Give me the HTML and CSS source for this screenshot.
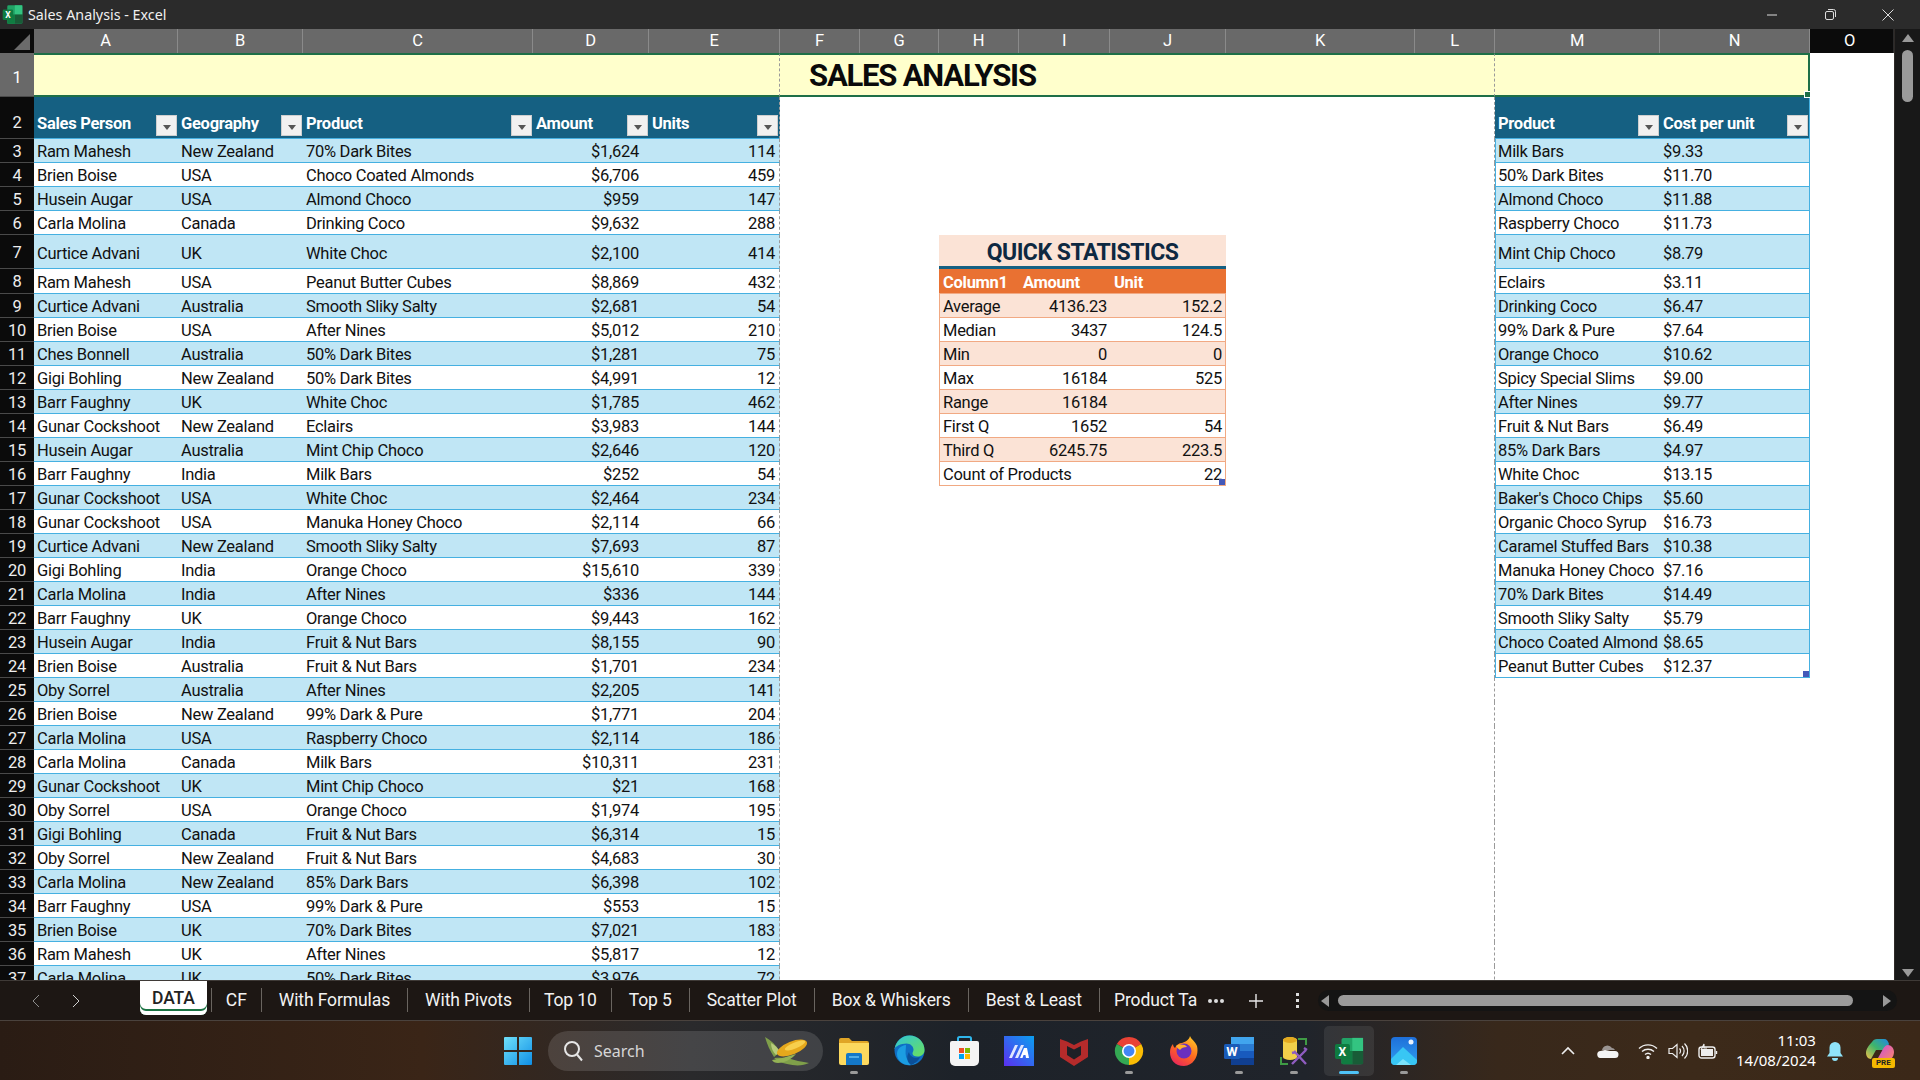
FILE: index.html
```html
<!DOCTYPE html>
<html lang="en">
<head>
    <meta charset="UTF-8">
    <title>Sales Analysis - Excel</title>
    <link rel="stylesheet" href="styles.css">
</head>
<body>
    <!-- Shared app icons -->
    <svg class="defs" width="0" height="0">
        <defs>
            <symbol id="excel" viewBox="0 0 32 32">
                <rect x="8" y="2" width="23" height="28" rx="2" fill="#21A366"/>
                <rect x="19.5" y="2" width="11.5" height="14" fill="#33C481"/>
                <rect x="8" y="16" width="11.5" height="14" fill="#107C41"/>
                <rect x="19.5" y="16" width="11.5" height="14" fill="#185C37"/>
                <rect x="1" y="8.5" width="16" height="16" rx="2" fill="#0F7B40"/>
                <text x="9" y="21.5" text-anchor="middle" font-family="Roboto" font-size="13" font-weight="700" fill="#fff">X</text>
            </symbol>
        </defs>
    </svg>

    <!-- Title bar -->
    <header class="titlebar">
        <svg class="app-icon" width="21" height="21"><use href="#excel"/></svg>
        <span class="doc-name">Sales Analysis - Excel</span>
        <div class="win-controls">
            <svg width="14" height="14" viewBox="0 0 14 14"><path d="M2 7h10" stroke="#ddd" stroke-width="1"/></svg>
            <svg width="14" height="14" viewBox="0 0 14 14" fill="none" stroke="#ddd"><rect x="2.5" y="3.5" width="8" height="8" rx="1.5"/><path d="M5 1.5h5.5a2 2 0 0 1 2 2V9"/></svg>
            <svg width="14" height="14" viewBox="0 0 14 14"><path d="M1.5 1.5l11 11M12.5 1.5l-11 11" stroke="#ddd" stroke-width="1"/></svg>
        </div>
    </header>

    <!-- Sheet -->
    <main class="workbook">
        <div class="sheet">
            <table class="grid">
                <colgroup>
                    <col class="w-rowhead"><col class="w-a"><col class="w-b"><col class="w-c"><col class="w-d"><col class="w-e">
                    <col class="w-f"><col class="w-g"><col class="w-h"><col class="w-i"><col class="w-j"><col class="w-k">
                    <col class="w-l"><col class="w-m"><col class="w-n"><col class="w-o">
                </colgroup>
                <thead>
                    <tr>
                        <th class="corner"><svg width="34" height="23" viewBox="0 0 34 23"><path d="M30 4v16H14z" fill="#6b6b6b"/></svg></th>
                        <th>A</th><th>B</th><th>C</th><th>D</th><th>E</th><th>F</th><th>G</th><th>H</th><th>I</th><th>J</th><th>K</th><th>L</th><th>M</th><th>N</th>
                        <th class="col-off">O</th>
                    </tr>
                </thead>
                <tbody>
                    <tr class="r1">
                        <th class="row-on">1</th>
                        <td class="banner dash-r" colspan="5"></td>
                        <td class="banner banner-mid dash-r" colspan="7"><span class="sheet-title">SALES ANALYSIS</span></td>
                        <td class="banner banner-end" colspan="2"></td>
                        <td class="blank"></td>
                    </tr>
                    <tr class="r2">
                        <th class="row-two">2</th>
                        <td class="head"><div class="hcell">Sales Person<span class="filter"></span></div></td>
                        <td class="head"><div class="hcell">Geography<span class="filter"></span></div></td>
                        <td class="head"><div class="hcell">Product<span class="filter"></span></div></td>
                        <td class="head"><div class="hcell">Amount<span class="filter"></span></div></td>
                        <td class="head dash-r"><div class="hcell">Units<span class="filter"></span></div></td>
                        <td class="blank dash-r" colspan="7"></td>
                        <td class="head"><div class="hcell">Product<span class="filter"></span></div></td>
                        <td class="head end"><div class="hcell">Cost per unit<span class="filter"></span></div></td>
                        <td class="blank"></td>
                    </tr>
                    <tr><th>3</th><td>Ram Mahesh</td><td>New Zealand</td><td>70% Dark Bites</td><td class="amt">$1,624</td><td class="units">114</td><td class="blank dash-r" colspan="7"></td><td class="m">Milk Bars</td><td class="end">$9.33</td><td class="blank"></td></tr>
                    <tr><th>4</th><td>Brien Boise</td><td>USA</td><td>Choco Coated Almonds</td><td class="amt">$6,706</td><td class="units">459</td><td class="blank dash-r" colspan="7"></td><td class="m">50% Dark Bites</td><td class="end">$11.70</td><td class="blank"></td></tr>
                    <tr><th>5</th><td>Husein Augar</td><td>USA</td><td>Almond Choco</td><td class="amt">$959</td><td class="units">147</td><td class="blank dash-r" colspan="7"></td><td class="m">Almond Choco</td><td class="end">$11.88</td><td class="blank"></td></tr>
                    <tr><th>6</th><td>Carla Molina</td><td>Canada</td><td>Drinking Coco</td><td class="amt">$9,632</td><td class="units">288</td><td class="blank dash-r" colspan="7"></td><td class="m">Raspberry Choco</td><td class="end">$11.73</td><td class="blank"></td></tr>
                    <tr class="r7">
                        <th>7</th><td>Curtice Advani</td><td>UK</td><td>White Choc</td><td class="amt">$2,100</td><td class="units">414</td>
                        <td class="blank" colspan="2"></td>
                        <td class="stat-title" colspan="3">QUICK STATISTICS</td>
                        <td class="blank dash-r" colspan="2"></td>
                        <td class="m">Mint Chip Choco</td><td class="end">$8.79</td><td class="blank"></td>
                    </tr>
                    <tr class="r8">
                        <th>8</th><td>Ram Mahesh</td><td>USA</td><td>Peanut Butter Cubes</td><td class="amt">$8,869</td><td class="units">432</td>
                        <td class="blank" colspan="2"></td>
                        <td class="stat-head">Column1</td><td class="stat-head">Amount</td><td class="stat-head">Unit</td>
                        <td class="blank dash-r" colspan="2"></td>
                        <td class="m">Eclairs</td><td class="end">$3.11</td><td class="blank"></td>
                    </tr>
                    <tr>
                        <th>9</th><td>Curtice Advani</td><td>Australia</td><td>Smooth Sliky Salty</td><td class="amt">$2,681</td><td class="units">54</td>
                        <td class="blank" colspan="2"></td>
                        <td class="stat s-l">Average</td><td class="stat s-n">4136.23</td><td class="stat s-r">152.2</td>
                        <td class="blank dash-r" colspan="2"></td>
                        <td class="m">Drinking Coco</td><td class="end">$6.47</td><td class="blank"></td>
                    </tr>
                    <tr>
                        <th>10</th><td>Brien Boise</td><td>USA</td><td>After Nines</td><td class="amt">$5,012</td><td class="units">210</td>
                        <td class="blank" colspan="2"></td>
                        <td class="stat s-l">Median</td><td class="stat s-n">3437</td><td class="stat s-r">124.5</td>
                        <td class="blank dash-r" colspan="2"></td>
                        <td class="m">99% Dark &amp; Pure</td><td class="end">$7.64</td><td class="blank"></td>
                    </tr>
                    <tr>
                        <th>11</th><td>Ches Bonnell</td><td>Australia</td><td>50% Dark Bites</td><td class="amt">$1,281</td><td class="units">75</td>
                        <td class="blank" colspan="2"></td>
                        <td class="stat s-l">Min</td><td class="stat s-n">0</td><td class="stat s-r">0</td>
                        <td class="blank dash-r" colspan="2"></td>
                        <td class="m">Orange Choco</td><td class="end">$10.62</td><td class="blank"></td>
                    </tr>
                    <tr>
                        <th>12</th><td>Gigi Bohling</td><td>New Zealand</td><td>50% Dark Bites</td><td class="amt">$4,991</td><td class="units">12</td>
                        <td class="blank" colspan="2"></td>
                        <td class="stat s-l">Max</td><td class="stat s-n">16184</td><td class="stat s-r">525</td>
                        <td class="blank dash-r" colspan="2"></td>
                        <td class="m">Spicy Special Slims</td><td class="end">$9.00</td><td class="blank"></td>
                    </tr>
                    <tr>
                        <th>13</th><td>Barr Faughny</td><td>UK</td><td>White Choc</td><td class="amt">$1,785</td><td class="units">462</td>
                        <td class="blank" colspan="2"></td>
                        <td class="stat s-l">Range</td><td class="stat s-n">16184</td><td class="stat s-r"></td>
                        <td class="blank dash-r" colspan="2"></td>
                        <td class="m">After Nines</td><td class="end">$9.77</td><td class="blank"></td>
                    </tr>
                    <tr>
                        <th>14</th><td>Gunar Cockshoot</td><td>New Zealand</td><td>Eclairs</td><td class="amt">$3,983</td><td class="units">144</td>
                        <td class="blank" colspan="2"></td>
                        <td class="stat s-l">First Q</td><td class="stat s-n">1652</td><td class="stat s-r">54</td>
                        <td class="blank dash-r" colspan="2"></td>
                        <td class="m">Fruit &amp; Nut Bars</td><td class="end">$6.49</td><td class="blank"></td>
                    </tr>
                    <tr>
                        <th>15</th><td>Husein Augar</td><td>Australia</td><td>Mint Chip Choco</td><td class="amt">$2,646</td><td class="units">120</td>
                        <td class="blank" colspan="2"></td>
                        <td class="stat s-l">Third Q</td><td class="stat s-n">6245.75</td><td class="stat s-r">223.5</td>
                        <td class="blank dash-r" colspan="2"></td>
                        <td class="m">85% Dark Bars</td><td class="end">$4.97</td><td class="blank"></td>
                    </tr>
                    <tr>
                        <th>16</th><td>Barr Faughny</td><td>India</td><td>Milk Bars</td><td class="amt">$252</td><td class="units">54</td>
                        <td class="blank" colspan="2"></td>
                        <td class="stat s-l" colspan="2">Count of Products</td><td class="stat s-r has-handle">22</td>
                        <td class="blank dash-r" colspan="2"></td>
                        <td class="m">White Choc</td><td class="end">$13.15</td><td class="blank"></td>
                    </tr>
                    <tr><th>17</th><td>Gunar Cockshoot</td><td>USA</td><td>White Choc</td><td class="amt">$2,464</td><td class="units">234</td><td class="blank dash-r" colspan="7"></td><td class="m">Baker's Choco Chips</td><td class="end">$5.60</td><td class="blank"></td></tr>
                    <tr><th>18</th><td>Gunar Cockshoot</td><td>USA</td><td>Manuka Honey Choco</td><td class="amt">$2,114</td><td class="units">66</td><td class="blank dash-r" colspan="7"></td><td class="m">Organic Choco Syrup</td><td class="end">$16.73</td><td class="blank"></td></tr>
                    <tr><th>19</th><td>Curtice Advani</td><td>New Zealand</td><td>Smooth Sliky Salty</td><td class="amt">$7,693</td><td class="units">87</td><td class="blank dash-r" colspan="7"></td><td class="m">Caramel Stuffed Bars</td><td class="end">$10.38</td><td class="blank"></td></tr>
                    <tr><th>20</th><td>Gigi Bohling</td><td>India</td><td>Orange Choco</td><td class="amt">$15,610</td><td class="units">339</td><td class="blank dash-r" colspan="7"></td><td class="m">Manuka Honey Choco</td><td class="end">$7.16</td><td class="blank"></td></tr>
                    <tr><th>21</th><td>Carla Molina</td><td>India</td><td>After Nines</td><td class="amt">$336</td><td class="units">144</td><td class="blank dash-r" colspan="7"></td><td class="m">70% Dark Bites</td><td class="end">$14.49</td><td class="blank"></td></tr>
                    <tr><th>22</th><td>Barr Faughny</td><td>UK</td><td>Orange Choco</td><td class="amt">$9,443</td><td class="units">162</td><td class="blank dash-r" colspan="7"></td><td class="m">Smooth Sliky Salty</td><td class="end">$5.79</td><td class="blank"></td></tr>
                    <tr><th>23</th><td>Husein Augar</td><td>India</td><td>Fruit &amp; Nut Bars</td><td class="amt">$8,155</td><td class="units">90</td><td class="blank dash-r" colspan="7"></td><td class="m">Choco Coated Almond</td><td class="end">$8.65</td><td class="blank"></td></tr>
                    <tr><th>24</th><td>Brien Boise</td><td>Australia</td><td>Fruit &amp; Nut Bars</td><td class="amt">$1,701</td><td class="units">234</td><td class="blank dash-r" colspan="7"></td><td class="m">Peanut Butter Cubes</td><td class="end has-handle">$12.37</td><td class="blank"></td></tr>
                    <tr><th>25</th><td>Oby Sorrel</td><td>Australia</td><td>After Nines</td><td class="amt">$2,205</td><td class="units">141</td><td class="blank dash-r" colspan="7"></td><td class="blank" colspan="3"></td></tr>
                    <tr><th>26</th><td>Brien Boise</td><td>New Zealand</td><td>99% Dark &amp; Pure</td><td class="amt">$1,771</td><td class="units">204</td><td class="blank dash-r" colspan="7"></td><td class="blank" colspan="3"></td></tr>
                    <tr><th>27</th><td>Carla Molina</td><td>USA</td><td>Raspberry Choco</td><td class="amt">$2,114</td><td class="units">186</td><td class="blank dash-r" colspan="7"></td><td class="blank" colspan="3"></td></tr>
                    <tr><th>28</th><td>Carla Molina</td><td>Canada</td><td>Milk Bars</td><td class="amt">$10,311</td><td class="units">231</td><td class="blank dash-r" colspan="7"></td><td class="blank" colspan="3"></td></tr>
                    <tr><th>29</th><td>Gunar Cockshoot</td><td>UK</td><td>Mint Chip Choco</td><td class="amt">$21</td><td class="units">168</td><td class="blank dash-r" colspan="7"></td><td class="blank" colspan="3"></td></tr>
                    <tr><th>30</th><td>Oby Sorrel</td><td>USA</td><td>Orange Choco</td><td class="amt">$1,974</td><td class="units">195</td><td class="blank dash-r" colspan="7"></td><td class="blank" colspan="3"></td></tr>
                    <tr><th>31</th><td>Gigi Bohling</td><td>Canada</td><td>Fruit &amp; Nut Bars</td><td class="amt">$6,314</td><td class="units">15</td><td class="blank dash-r" colspan="7"></td><td class="blank" colspan="3"></td></tr>
                    <tr><th>32</th><td>Oby Sorrel</td><td>New Zealand</td><td>Fruit &amp; Nut Bars</td><td class="amt">$4,683</td><td class="units">30</td><td class="blank dash-r" colspan="7"></td><td class="blank" colspan="3"></td></tr>
                    <tr><th>33</th><td>Carla Molina</td><td>New Zealand</td><td>85% Dark Bars</td><td class="amt">$6,398</td><td class="units">102</td><td class="blank dash-r" colspan="7"></td><td class="blank" colspan="3"></td></tr>
                    <tr><th>34</th><td>Barr Faughny</td><td>USA</td><td>99% Dark &amp; Pure</td><td class="amt">$553</td><td class="units">15</td><td class="blank dash-r" colspan="7"></td><td class="blank" colspan="3"></td></tr>
                    <tr><th>35</th><td>Brien Boise</td><td>UK</td><td>70% Dark Bites</td><td class="amt">$7,021</td><td class="units">183</td><td class="blank dash-r" colspan="7"></td><td class="blank" colspan="3"></td></tr>
                    <tr><th>36</th><td>Ram Mahesh</td><td>UK</td><td>After Nines</td><td class="amt">$5,817</td><td class="units">12</td><td class="blank dash-r" colspan="7"></td><td class="blank" colspan="3"></td></tr>
                    <tr><th>37</th><td>Carla Molina</td><td>UK</td><td>50% Dark Bites</td><td class="amt">$3,976</td><td class="units">72</td><td class="blank dash-r" colspan="7"></td><td class="blank" colspan="3"></td></tr>
                </tbody>
            </table>
        </div>
        <div class="vscroll">
            <span class="arrow-up"></span>
            <span class="vthumb"></span>
            <span class="arrow-down"></span>
        </div>
    </main>

    <!-- Sheet tabs -->
    <nav class="tabbar">
        <div class="tab-nav">
            <svg width="10" height="16" viewBox="0 0 10 16" fill="none" stroke="#8d8d8d"><path d="M8 2L2 8l6 6"/></svg>
            <svg width="10" height="16" viewBox="0 0 10 16" fill="none" stroke="#d0d0d0"><path d="M2 2l6 6-6 6"/></svg>
        </div>
        <div class="tabs">
            <span class="tab active">DATA</span>
            <span class="tab tight">CF</span>
            <span class="tab">With Formulas</span>
            <span class="tab">With Pivots</span>
            <span class="tab tight">Top 10</span>
            <span class="tab">Top 5</span>
            <span class="tab">Scatter Plot</span>
            <span class="tab">Box &amp; Whiskers</span>
            <span class="tab">Best &amp; Least</span>
            <span class="tab last">Product Ta</span>
        </div>
        <span class="tab-more"><i></i><i></i><i></i></span>
        <svg class="tab-add" width="16" height="16" viewBox="0 0 16 16"><path d="M8 1v14M1 8h14" stroke="#e8e8e8" stroke-width="1.4"/></svg>
        <span class="tab-menu"><i></i><i></i><i></i></span>
        <div class="hscroll">
            <span class="arrow-left"></span>
            <span class="hthumb"></span>
            <span class="arrow-right"></span>
        </div>
    </nav>

    <!-- Windows taskbar -->
    <footer class="taskbar">
        <svg class="start" width="30" height="30" viewBox="0 0 30 30">
            <defs><linearGradient id="win" x1="0" y1="0" x2="1" y2="1"><stop offset="0" stop-color="#6fe0fa"/><stop offset="1" stop-color="#0f8fe6"/></linearGradient></defs>
            <path d="M1 2a1 1 0 0 1 1-1h12v13H1zM16 1h12a1 1 0 0 1 1 1v12H16zM1 16h13v13H2a1 1 0 0 1-1-1zM16 16h13v12a1 1 0 0 1-1 1H16z" fill="url(#win)"/>
        </svg>
        <div class="search">
            <svg width="20" height="22" viewBox="0 0 20 22" fill="none" stroke="#e6e6e6" stroke-width="2"><circle cx="9" cy="9" r="7"/><path d="M14 14.5l5 6"/></svg>
            <span>Search</span>
            <svg class="corn" width="50" height="34" viewBox="0 0 50 34">
                <path d="M3 3c6 3 11 8 15 15l-6 5C8 17 5 10 3 3zM12 24c8-1 16 0 24 3 4 1 8 1 11 2-6 3-14 3-22 1-6-1-10-3-13-6z" fill="#7f9f4a"/>
                <path d="M9 9c4 2 7 5 9 9l-4 3c-3-3-5-7-5-12z" fill="#b8cc7c"/>
                <ellipse cx="30" cy="14" rx="16" ry="6.500" transform="rotate(-22 30 14)" fill="#e5a81c"/>
                <ellipse cx="33" cy="11.500" rx="11" ry="3" transform="rotate(-22 33 11.500)" fill="#f7cf4d"/>
                <path d="M10 26c8-1 16-4 24-6-4 5-12 9-18 9-3 0-5-1-6-3z" fill="#94b255"/>
            </svg>
        </div>
        <div class="apps">
            <span class="app running">
                <svg width="30" height="28" viewBox="0 0 30 28">
                    <path d="M0 3a2 2 0 0 1 2-2h8l3 3h15a2 2 0 0 1 2 2v4H0z" fill="#e0a526"/>
                    <path d="M0 6h30v20a2 2 0 0 1-2 2H2a2 2 0 0 1-2-2z" fill="#fcd95e"/>
                    <path d="M7 18a2 2 0 0 1 2-2h12a2 2 0 0 1 2 2v10H7z" fill="#1478c8"/>
                    <path d="M10 20h10" stroke="#6cc4f5" stroke-width="1.4"/>
                </svg>
            </span>
            <span class="app">
                <svg width="31" height="31" viewBox="0 0 31 31">
                    <defs><linearGradient id="edge" x1="0" y1="0" x2="1" y2="1"><stop offset="0" stop-color="#2fc4d8"/><stop offset="1" stop-color="#6be05c"/></linearGradient></defs>
                    <circle cx="15.5" cy="15.5" r="15" fill="#0f6ec4"/>
                    <path d="M.6 14C2 6 8 .5 15.5.5 24 .5 30.5 7 30.5 15c0 4-3 6.500-7 6.500-3 0-5-1-5-3 0-1.500 1-2 1-4 0-3-3-6-7-6-6 0-11 3-12.400 5.500z" fill="url(#edge)"/>
                    <path d="M12 10c-5 .5-9 4-9 9 0 6 5 11 12 11 3 0 6-1 8-2.500-6 1-10-2-11-6-1-4 0-8 0-11.500z" fill="#1b9de2"/>
                    <path d="M15 17c1 5 6 7 11 5-1 3-5 7-9 8-4-3-5-8-2-13z" fill="#0b4f98"/>
                </svg>
            </span>
            <span class="app">
                <svg width="29" height="30" viewBox="0 0 29 30">
                    <path d="M8 6V2.500A1.500 1.500 0 0 1 9.500 1h10A1.500 1.500 0 0 1 21 2.500V6" fill="none" stroke="#2fb6ec" stroke-width="2"/>
                    <path d="M0 7a2 2 0 0 1 2-2h25a2 2 0 0 1 2 2v18a5 5 0 0 1-5 5H5a5 5 0 0 1-5-5z" fill="#f4f4f4"/>
                    <rect x="9" y="12" width="5" height="5" fill="#f04e23"/><rect x="15" y="12" width="5" height="5" fill="#7eb900"/>
                    <rect x="9" y="18" width="5" height="5" fill="#00a3ee"/><rect x="15" y="18" width="5" height="5" fill="#ffb900"/>
                </svg>
            </span>
            <span class="app">
                <svg width="30" height="30" viewBox="0 0 30 30">
                    <defs><linearGradient id="mapp" x1="0" y1="1" x2="1" y2="0"><stop offset="0" stop-color="#5b2ff0"/><stop offset="1" stop-color="#0aa0f0"/></linearGradient></defs>
                    <rect width="30" height="30" fill="url(#mapp)"/>
                    <path d="M5 22L11 9h3L8 22zM11 22l6-13h3l-6 13z" fill="#dfe6ff"/>
                    <path d="M16 22l4-10h3l2 10h-3l-.5-3h-2l-1 3z" fill="#fff"/>
                </svg>
            </span>
            <span class="app">
                <svg width="28" height="30" viewBox="0 0 28 30"><path d="M0 3l7 2.500L14 9l7-3.500L28 3v18l-14 9L0 21z" fill="#b52b2b"/><path d="M7 10l7 3.500L21 10v9l-7 4.500L7 19z" fill="#1e2026"/></svg>
            </span>
            <span class="app running">
                <svg width="30" height="30" viewBox="0 0 32 32">
                    <path d="M16 16L3 8.500A15 15 0 0 1 29 8.500z" fill="#e94235"/>
                    <path d="M16 16L29 8.500A15 15 0 0 1 16 31z" fill="#fbbc04"/>
                    <path d="M16 16L16 31A15 15 0 0 1 3 8.500z" fill="#34a853"/>
                    <circle cx="16" cy="16" r="7.500" fill="#fff"/><circle cx="16" cy="16" r="5.800" fill="#4285f4"/>
                </svg>
            </span>
            <span class="app">
                <svg width="28" height="30" viewBox="0 0 28 30">
                    <defs><linearGradient id="fox" x1="0.800" y1="0" x2="0.200" y2="1"><stop offset="0" stop-color="#ffc627"/><stop offset="0.500" stop-color="#ff6a1f"/><stop offset="1" stop-color="#e8235d"/></linearGradient></defs>
                    <path d="M20 0c1 3 5 5 7 10 2 8-2 19-13 20C5 30 0 24 0 16c0-3 1-6 3-8 0 2 1 3 2 4 1-3 4-5 7-5 3-1 7-3 8-7z" fill="url(#fox)"/>
                    <circle cx="14" cy="15" r="7.500" fill="#6a2fbf"/>
                    <path d="M6 10c3-2 9-2 11 1-3 0-6 1-7 3-1-1-3-2-4-4z" fill="#ffb02e"/>
                </svg>
            </span>
            <span class="app running">
                <svg width="30" height="30" viewBox="0 0 30 30">
                    <rect x="7" y="1" width="23" height="28" rx="2" fill="#2b7cd3"/>
                    <rect x="7" y="1" width="23" height="7" fill="#41a5ee"/><rect x="7" y="15" width="23" height="7" fill="#185abd"/><rect x="7" y="22" width="23" height="7" fill="#103f91"/>
                    <rect x="0" y="8" width="16" height="15" rx="1.500" fill="#1a5bb8"/>
                    <text x="8" y="20" text-anchor="middle" font-family="Roboto" font-size="13" font-weight="700" fill="#fff">W</text>
                </svg>
            </span>
            <span class="app running">
                <svg width="28" height="30" viewBox="0 0 28 30">
                    <path d="M3 4a7 3 0 0 1 14 0v17a7 3 0 0 1-14 0z" fill="#f2cf4a"/><ellipse cx="10" cy="4" rx="7" ry="3" fill="#e3a91f"/>
                    <path d="M18 3h8v6M1 21v7h7" fill="none" stroke="#3f9b45" stroke-width="2"/>
                    <path d="M12 28L26 14M14 15l12 13M12 17l4-1M24 12l3 2" fill="none" stroke="#8f5cc0" stroke-width="2.400"/>
                </svg>
            </span>
            <span class="app active">
                <svg width="30" height="30"><use href="#excel"/></svg>
            </span>
            <span class="app running">
                <svg width="26" height="28" viewBox="0 0 26 28">
                    <defs><linearGradient id="pho" x1="0" y1="0" x2="0" y2="1"><stop offset="0" stop-color="#1e6fd9"/><stop offset="1" stop-color="#2f9ef0"/></linearGradient></defs>
                    <rect width="26" height="28" rx="4" fill="url(#pho)"/>
                    <circle cx="20" cy="5" r="2.500" fill="#e8f2ff"/>
                    <path d="M0 22l12-12 14 13v1a4 4 0 0 1-4 4H4a4 4 0 0 1-4-4z" fill="#38c6f4"/>
                    <path d="M5 28l7-6 8 6z" fill="#7be3fb"/>
                </svg>
            </span>
        </div>
        <div class="tray">
            <svg width="16" height="10" viewBox="0 0 16 10" fill="none" stroke="#eee" stroke-width="1.600"><path d="M2 8l6-6 6 6"/></svg>
            <svg class="tray-cloud" width="22" height="14" viewBox="0 0 22 14"><path d="M5 6a5.500 5.500 0 0 1 10-2 4 4 0 0 1 3 2z" fill="#9a9492"/><path d="M4 14a3.500 3.500 0 0 1-.5-7L8 6l5 1 5 0a3.500 3.500 0 0 1 0 7z" fill="#f4f4f4"/></svg>
            <svg class="tray-wifi" width="20" height="16" viewBox="0 0 20 16" fill="none" stroke="#eee" stroke-width="1.400"><path d="M1 5.500a13 13 0 0 1 18 0M4 8.500a9 9 0 0 1 12 0M7 11.500a4.500 4.500 0 0 1 6 0"/><circle cx="10" cy="14.500" r="1" fill="#eee"/></svg>
            <svg width="20" height="18" viewBox="0 0 20 18" fill="none" stroke="#eee" stroke-width="1.200"><path d="M1 6.500h3.500L9 2.500v13l-4.500-4H1z"/><path d="M11.500 6.500a3.500 3.500 0 0 1 0 5M14 4a7 7 0 0 1 0 10M16.500 1.500a10.500 10.500 0 0 1 0 15"/></svg>
            <svg width="20" height="16" viewBox="0 0 20 16" fill="none" stroke="#eee" stroke-width="1.400"><rect x="1" y="4" width="16" height="11" rx="2.500"/><rect x="3" y="6" width="12" height="7" fill="#eee" stroke="none"/><path d="M18.500 8v3"/><path d="M3 7l3-6v4h3" stroke-width="1.100"/></svg>
            <div class="clock">
                <div>11:03</div>
                <div>14/08/2024</div>
            </div>
            <svg class="bell" width="18" height="20" viewBox="0 0 18 20"><path d="M9 1a5.500 5.500 0 0 1 5.500 5.500V12l2.500 3.500H1L3.500 12V6.500A5.500 5.500 0 0 1 9 1z" fill="#8fe3f9"/><path d="M6 17h6a3 3 0 0 1-6 0z" fill="#8fe3f9"/></svg>
            <span class="copilot">
                <svg width="28" height="26" viewBox="0 0 28 26">
                    <defs>
                        <linearGradient id="cop1" x1="0" y1="1" x2="1" y2="0"><stop offset="0" stop-color="#f2c14a"/><stop offset="0.500" stop-color="#3fb56a"/><stop offset="1" stop-color="#1e88e5"/></linearGradient>
                        <linearGradient id="cop2" x1="0" y1="0" x2="1" y2="1"><stop offset="0" stop-color="#c94fd8"/><stop offset="1" stop-color="#ff8a65"/></linearGradient>
                    </defs>
                    <path d="M6 4c1-2 3-3 5-3h7c3 0 4 2 5 5l-3 6H10l-5 9c-3 0-5-3-5-6 0-4 3-8 6-11z" fill="url(#cop1)"/>
                    <path d="M12 20l5-9c1-2 3-4 5-4 3 0 6 3 6 7 0 5-4 10-9 10h-3c-2 0-4-2-4-4z" fill="url(#cop2)"/>
                </svg>
                <b>PRE</b>
            </span>
        </div>
    </footer>
</body>
</html>
```

FILE: styles.css
```css
* {
    box-sizing: border-box;
}

body {
    margin: 0;
    height: 100vh;
    display: flex;
    flex-direction: column;
    overflow: hidden;
    font-family: Roboto, "Liberation Sans", sans-serif;
    font-size: 17px;
    background: #1c1715;
}

.defs {
    position: absolute;
}

/* Title bar */
.titlebar {
    height: 29px;
    flex: none;
    display: flex;
    align-items: center;
    background: #2b2b2b;
    color: #f0f0f0;
    font-family: "Noto Sans", sans-serif;
    font-size: 14.3px;
}

.app-icon {
    margin-left: 2px;
}

.doc-name {
    margin-left: 5px;
}

.win-controls {
    margin-left: auto;
    display: flex;
    gap: 44px;
    padding-right: 25px;
}

/* Sheet area */
.workbook {
    flex: 1;
    min-height: 0;
    display: flex;
}

.sheet {
    width: 1894px;
    flex: none;
    overflow: hidden;
    background: #fff;
}

.grid {
    width: 1894px;
    table-layout: fixed;
    border-collapse: separate;
    border-spacing: 0;
    color: #111;
    font-size: 16.5px;
    letter-spacing: -0.28px;
}

.w-rowhead { width: 34px; }
.w-a { width: 144px; }
.w-b { width: 125px; }
.w-c { width: 230px; }
.w-d { width: 116px; }
.w-e { width: 131px; }
.w-f { width: 80px; }
.w-g { width: 79px; }
.w-h { width: 80px; }
.w-i { width: 91px; }
.w-j { width: 116px; }
.w-k { width: 189px; }
.w-l { width: 80px; }
.w-m { width: 165px; }
.w-n { width: 150px; }
.w-o { width: 84px; }

.grid tr {
    height: 24px;
}

.grid th,
.grid td {
    padding: 0;
    overflow: visible;
    white-space: nowrap;
    font-weight: 400;
    line-height: 20px;
}

thead tr {
    height: 23px;
}

thead th {
    background: #696969;
    color: #fff;
    border-right: 1px solid #8a8a8a;
}

thead .corner {
    background: #0b0b0b;
    border-right: 0;
    line-height: 0;
}

thead .col-off {
    background: #0b0b0b;
    border-right: 1px solid #2a2a2a;
    padding-right: 4px;
}

.grid tbody th {
    background: #0b0b0b;
    color: #eee;
    padding-top: 2px;
    border-bottom: 1px solid #4a4a4a;
}

.grid tbody th.row-on {
    background: #696969;
    color: #fff;
    padding-top: 6px;
}

.grid tbody th.row-two {
    padding-top: 10px;
}

.grid td {
    padding-top: 2px;
    padding-left: 3px;
    background: #fff;
    border-bottom: 1px solid #45b0e1;
}

tbody tr:nth-child(odd) td {
    background: #c0e6f5;
}

.grid tr.r1 {
    height: 44px;
}

.grid tr.r2 {
    height: 42px;
}

.grid tr.r7 {
    height: 34px;
}

.grid tr.r7 td {
    padding-top: 4px;
}

.grid tr.r8 {
    height: 25px;
}

.grid tr.r8 td {
    padding-top: 3px;
}

tbody tr td.blank {
    background: #fff;
    border-bottom: 0;
}

.dash-r {
    border-right: 1px dashed #9a9a9a;
}

/* Row 1 banner */
tbody tr td.banner {
    padding-top: 0;
    background: #ffffcc;
    border-top: 2px solid #1e6f47;
    border-bottom: 2px solid #1e6f47;
}

.grid td.banner-mid {
    padding-left: 29px;
}

.grid td.banner-end {
    position: relative;
    border-right: 2px solid #1e6f47;
}

.banner-end::after {
    content: "";
    position: absolute;
    right: -3px;
    bottom: -3px;
    width: 5px;
    height: 5px;
    background: #1e6f47;
    border: 1px solid #fff;
}

.sheet-title {
    font-size: 31px;
    font-weight: 700;
    letter-spacing: -1.2px;
    color: #0a0a0a;
    line-height: 36px;
    position: relative;
    top: 1px;
}

/* Sales and product tables */
.grid td.head {
    padding-top: 0;
    background: #156082;
    color: #fff;
    font-weight: 700;
    vertical-align: bottom;
    padding-bottom: 2px;
    border-bottom: 1px solid #45b0e1;
}

.hcell {
    display: flex;
    justify-content: space-between;
    align-items: flex-start;
    padding-right: 1px;
    line-height: 17px;
}

.filter {
    width: 21px;
    height: 21px;
    flex: none;
    display: flex;
    align-items: center;
    justify-content: center;
    background: #f1f1f1;
    border: 1px solid #cfcfcf;
}

.filter::after {
    content: "";
    margin-top: 4px;
    border-left: 4px solid transparent;
    border-right: 4px solid transparent;
    border-top: 5px solid #555;
}

.grid td.amt {
    text-align: right;
    padding-right: 10px;
}

.grid td.units {
    text-align: right;
    padding-right: 4px;
    border-right: 1px dashed #9a9a9a;
}

.grid td.m {
    padding-left: 2px;
    border-left: 1px solid #45b0e1;
}

.grid td.end {
    border-right: 1px solid #45b0e1;
}

.has-handle {
    position: relative;
}

.has-handle::after {
    content: "";
    position: absolute;
    right: 0;
    bottom: 0;
    width: 6px;
    height: 6px;
    background: #4459b8;
}

/* Quick statistics */
tbody tr.r7 td.stat-title {
    background: #fbe3d6;
    color: #0e2841;
    font-size: 23px;
    font-weight: 700;
    letter-spacing: -0.5px;
    text-align: center;
    padding: 4px 0 0;
    border-bottom: 3px solid #156082;
}

tbody tr td.stat-head {
    background: #e97132;
    color: #fff;
    font-weight: 700;
    padding-left: 4px;
    border-bottom: 1px solid #f1a983;
}

.grid td.stat {
    background: #fff;
    border-bottom: 1px solid #f1a983;
}

tbody tr:nth-child(odd) td.stat {
    background: #fbe3d6;
}

.grid td.s-l {
    padding-left: 3px;
    border-left: 1px solid #f1a983;
}

.grid td.s-n {
    text-align: right;
    padding-right: 3px;
}

.grid td.s-r {
    text-align: right;
    padding-right: 3px;
    border-right: 1px solid #f1a983;
}

/* Scrollbars */
.vscroll {
    flex: 1;
    position: relative;
    background: #181818;
    border-left: 1px solid #2e2a28;
}

.vthumb {
    position: absolute;
    left: 7px;
    top: 21px;
    width: 11px;
    height: 52px;
    border-radius: 6px;
    background: #9a9a9a;
}

.arrow-up,
.arrow-down {
    position: absolute;
    left: 7px;
    border-left: 6px solid transparent;
    border-right: 6px solid transparent;
}

.arrow-up {
    top: 5px;
    border-bottom: 8px solid #999;
}

.arrow-down {
    bottom: 3px;
    border-top: 8px solid #999;
}

/* Sheet tabs */
.tabbar {
    height: 40px;
    flex: none;
    display: flex;
    align-items: center;
    background: #1d1714;
    color: #f2f2f2;
    border-top: 1px solid #3f3a37;
}

.tab-nav {
    width: 140px;
    flex: none;
    display: flex;
    gap: 30px;
    padding-left: 31px;
}

.tabs {
    display: flex;
    align-items: flex-start;
    height: 100%;
    width: 1057px;
    flex: none;
    overflow: hidden;
}

.tab {
    height: 24px;
    margin-top: 7px;
    padding: 0 17px;
    line-height: 24px;
    font-size: 17.5px;
    letter-spacing: -0.1px;
    border-left: 1px solid #6a6560;
    white-space: nowrap;
}

.tab.tight {
    padding: 0 14px;
}

.tab.last {
    padding: 0 0 0 14px;
}

.tab.active {
    height: 35px;
    margin-top: -1px;
    padding: 6px 12px 0;
    background: #fff;
    color: #222;
    font-weight: 500;
    border: 0;
    border-radius: 0 0 6px 6px;
    margin-right: 4px;
    box-shadow: inset 0 -4px 0 #fff, inset 0 -6px 0 #1a7343;
}

.tab-more {
    width: 30px;
    flex: none;
    display: flex;
    justify-content: center;
    gap: 2px;
    margin-left: 4px;
}

.tab-more i {
    width: 4px;
    height: 4px;
    border-radius: 50%;
    background: #ddd;
}

.tab-add {
    margin-left: 17px;
    flex: none;
}

.tab-menu {
    margin-left: 32px;
    flex: none;
    display: flex;
    flex-direction: column;
    gap: 3px;
}

.tab-menu i {
    width: 3px;
    height: 3px;
    background: #ddd;
}

.hscroll {
    position: relative;
    margin-left: 19px;
    margin-right: 23px;
    flex: 1;
    height: 21px;
    border-radius: 11px;
    background: #141414;
}

.hthumb {
    position: absolute;
    left: 20px;
    top: 5px;
    width: 515px;
    height: 11px;
    border-radius: 6px;
    background: #9a9a9a;
}

.arrow-left,
.arrow-right {
    position: absolute;
    top: 5px;
    border-top: 6px solid transparent;
    border-bottom: 6px solid transparent;
}

.arrow-left {
    left: 3px;
    border-right: 8px solid #999;
}

.arrow-right {
    right: 6px;
    border-left: 8px solid #999;
}

/* Taskbar */
.taskbar {
    height: 60px;
    flex: none;
    display: flex;
    align-items: center;
    border-top: 1px solid #4a423d;
    background: linear-gradient(90deg, #2a1c14 0%, #3a2517 22%, #2a2a2c 36%, #1d2229 50%, #20242b 68%, #38281b 78%, #3c2a1a 88%, #3b2818 100%);
    color: #fff;
}

.start {
    margin-left: 503px;
    flex: none;
}

.search {
    margin-left: 15px;
    width: 275px;
    height: 40px;
    flex: none;
    display: flex;
    align-items: center;
    padding-left: 15px;
    border-radius: 20px;
    background: rgba(255, 255, 255, 0.13);
    color: #d6d6d6;
    font-family: "Noto Sans", sans-serif;
    font-size: 16px;
}

.search span {
    margin-left: 11px;
}

.corn {
    margin-left: auto;
    margin-right: 11px;
}

.apps {
    margin-left: 6px;
    display: flex;
    gap: 5px;
}

.app {
    position: relative;
    width: 50px;
    height: 50px;
    display: flex;
    align-items: center;
    justify-content: center;
    border-radius: 5px;
}

.app.running::after,
.app.active::after {
    content: "";
    position: absolute;
    bottom: 2px;
    left: 21px;
    width: 8px;
    height: 3px;
    border-radius: 2px;
    background: #9a9a9a;
}

.app.active {
    background: rgba(255, 255, 255, 0.08);
}

.app.active::after {
    left: 15px;
    width: 20px;
    background: #4fc3f7;
}

.tray {
    margin-left: 131px;
    flex: 1;
    display: flex;
    align-items: center;
    gap: 10px;
}

.tray-cloud {
    margin-left: 11px;
}

.tray-wifi {
    margin-left: 9px;
}

.clock {
    margin-left: 8px;
    padding-bottom: 2px;
    text-align: right;
    font-family: "Noto Sans", sans-serif;
    font-size: 15px;
    line-height: 20px;
}

.copilot {
    position: relative;
    margin-left: 12px;
    display: flex;
}

.copilot b {
    position: absolute;
    right: -1px;
    bottom: -4px;
    width: 23px;
    height: 10px;
    border-radius: 2px;
    background: #f5b800;
    color: #222;
    font-size: 8px;
    line-height: 10px;
    text-align: center;
}
```
